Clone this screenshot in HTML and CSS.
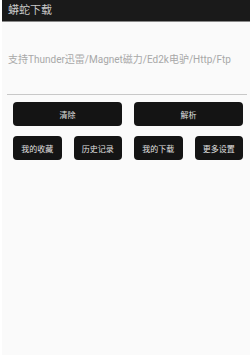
FILE: index.html
```html
<!DOCTYPE html>
<html lang="zh">
<head>
    <meta charset="UTF-8">
    <title>蟒蛇下载</title>
    <link rel="stylesheet" href="styles.css">
</head>
<body>
    <div class="app">
        <div class="toolbar">蟒蛇下载</div>
        <div class="url-box">
            <div class="url-input">支持Thunder迅雷/Magnet磁力/Ed2k电驴/Http/Ftp</div>
        </div>
        <div class="actions">
            <div class="row">
                <button class="btn">清除</button>
                <button class="btn">解析</button>
            </div>
            <div class="row">
                <button class="btn">我的收藏</button>
                <button class="btn">历史记录</button>
                <button class="btn">我的下载</button>
                <button class="btn">更多设置</button>
            </div>
        </div>
    </div>
</body>
</html>
```

FILE: styles.css
```css
body {
    margin: 0;
    padding: 0;
    background-color: #fff;
    font-family: 'Roboto', 'Noto Sans CJK SC', sans-serif;
}
.app {
    margin-left: 2px;
    height: 355px;
    background-color: #fafafa;
}
.toolbar {
    height: 22px;
    line-height: 22px;
    padding-left: 6px;
    background-color: #1a1a1a;
    color: #c8c8c8;
    font-size: 11px;
    border-bottom: 1px solid #888;
    box-sizing: border-box;
}
.url-box {
    padding: 0 3px 0 5px;
}
.url-input {
    height: 72px;
    padding-left: 1px;
    line-height: 76px;
    font-size: 10px;
    color: #a8a8a8;
    border-bottom: 1px solid #c8c8c8;
    white-space: nowrap;
}
.actions {
    padding: 7px 7px 0 11px;
}
.row {
    display: flex;
    gap: 12px;
    margin-bottom: 10px;
}
.btn {
    flex: 1;
    height: 24px;
    padding: 0;
    border: none;
    border-radius: 4px;
    background-color: #141414;
    color: #e0e0e0;
    font-family: 'Noto Sans CJK SC', sans-serif;
    font-size: 8px;
}
```
